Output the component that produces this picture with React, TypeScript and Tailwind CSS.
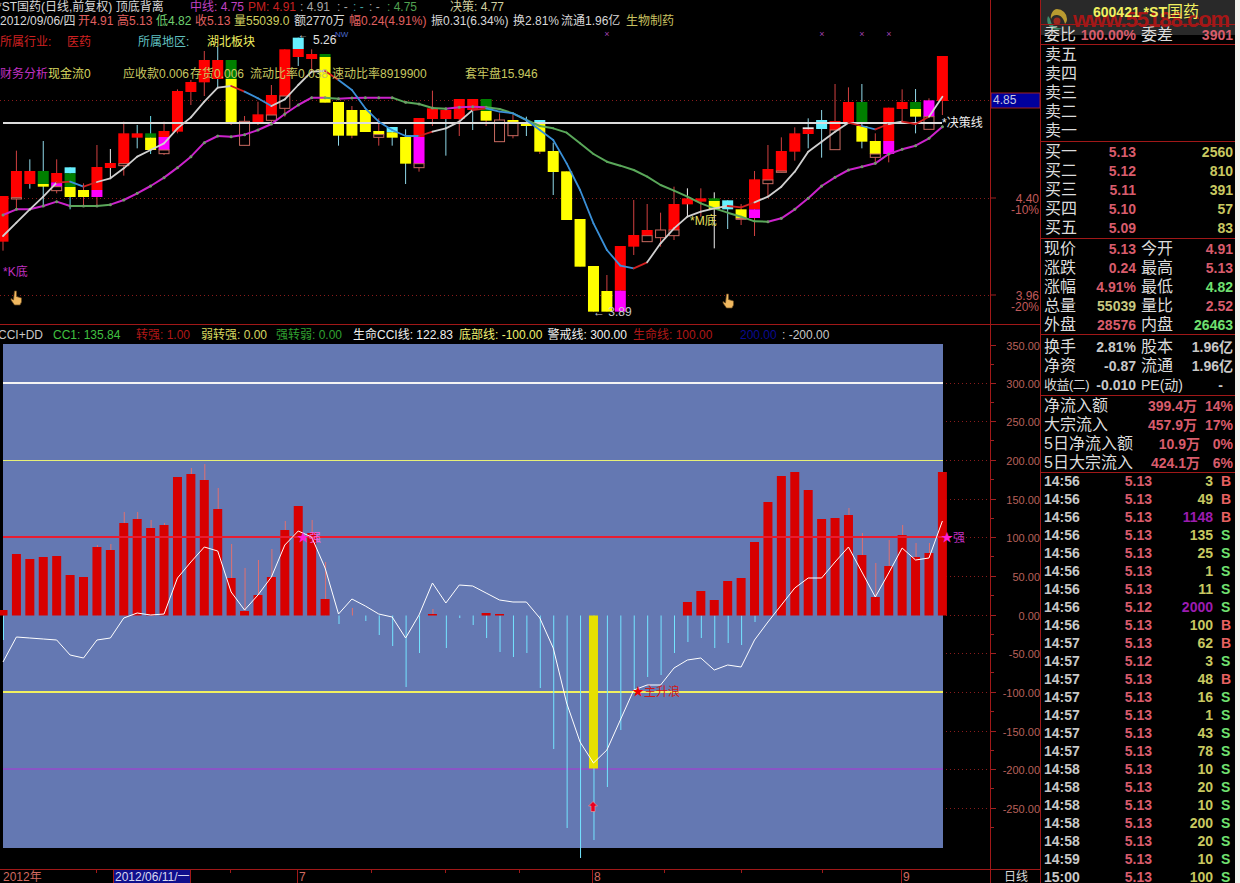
const FONT = "font-['Liberation_Sans','Noto_Sans_CJK_SC',sans-serif]";

const X = (i: number) => 3 + 13.42 * i;

const CLR: Record<string, string> = {
  r: "#ff0000",
  y: "#ffff00",
  g: "#007f00",
  c: "#66f0ff",
  m: "#ff00ff",
  w: "#e8e8e8",
};

// hi, lo, wick colour, then body pieces [top, bottom, colour] ("h" = hollow). y values are taken at 3x zoom
type Candle = [number, number, string, ...[number, number, string][]];
const CANDLES: Candle[] = [
  [588, 752, "#d04040", [588, 725, "r"]],
  [452, 625, "#d04040", [513, 593, "r"], [593, 597, "h"]],
  [478, 566, "#8fd8e8", [513, 552, "r"]],
  [423, 620, "#8fd8e8", [513, 552, "g"], [552, 560, "y"]],
  [478, 580, "#d04040", [519, 547, "r"], [547, 560, "m"], [560, 572, "h"]],
  [502, 628, "#66d8e8", [502, 520, "c"], [520, 561, "g"], [561, 591, "y"]],
  [550, 615, "#d04040", [570, 591, "y"]],
  [435, 615, "#d04040", [501, 570, "r"], [570, 591, "m"]],
  [447, 535, "#f0f0f0", [489, 504, "r"]],
  [365, 527, "#d04040", [400, 491, "r"], [491, 497, "h"]],
  [375, 445, "#8fd8e8", [400, 413, "r"]],
  [348, 462, "#66d8e8", [400, 413, "g"], [413, 450, "y"]],
  [365, 465, "#d04040", [393, 411, "r"], [411, 450, "m"], [450, 461, "h"]],
  [268, 400, "#d04040", [273, 395, "r"]],
  [240, 315, "#d04040", [246, 276, "r"]],
  [153, 288, "#d04040", [180, 247, "r"]],
  [140, 265, "#8fd8e8", [180, 237, "r"]],
  [180, 375, "#d04040", [180, 237, "g"], [237, 367, "y"]],
  [348, 436, "#d04040", [364, 436, "h"]],
  [305, 375, "#d04040", [343, 367, "r"]],
  [255, 375, "#d04040", [285, 345, "r"], [345, 361, "h"]],
  [148, 350, "#d04040", [148, 288, "r"], [288, 325, "h"]],
  [113, 198, "#8fd8e8", [113, 147, "c"], [147, 171, "r"]],
  [148, 215, "#d04040", [162, 177, "r"]],
  [162, 308, "#d04040", [162, 171, "g"], [171, 308, "y"]],
  [306, 437, "#8fd8e8", [306, 407, "y"]],
  [318, 415, "#d04040", [330, 407, "y"]],
  [330, 396, "#d04040", [330, 396, "y"]],
  [355, 437, "#d04040", [393, 404, "y"], [404, 412, "h"]],
  [381, 437, "#8fd8e8", [381, 397, "c"], [397, 413, "y"]],
  [388, 552, "#8fd8e8", [411, 491, "y"]],
  [354, 515, "#d04040", [354, 411, "r"], [411, 491, "m"], [491, 503, "h"]],
  [272, 378, "#d04040", [325, 357, "r"]],
  [330, 467, "#8fd8e8", [330, 357, "r"]],
  [297, 408, "#d04040", [297, 357, "r"]],
  [297, 390, "#8fd8e8", [297, 330, "r"]],
  [297, 378, "#d04040", [297, 333, "g"], [333, 362, "y"]],
  [340, 425, "#d04040", [360, 425, "h"]],
  [345, 415, "#d04040", [360, 367, "y"], [367, 407, "h"]],
  [350, 408, "#8fd8e8", [367, 378, "y"]],
  [360, 462, "#d04040", [360, 372, "c"], [372, 455, "y"]],
  [428, 585, "#8fd8e8", [453, 516, "y"]],
  [514, 660, "#d04040", [514, 660, "y"]],
  [657, 800, "#d04040", [657, 800, "y"]],
  [798, 935, "#d04040", [798, 935, "y"]],
  [825, 935, "#d04040", [873, 935, "y"]],
  [738, 935, "#d04040", [738, 872, "r"], [872, 935, "m"]],
  [600, 765, "#d04040", [705, 740, "r"]],
  [612, 725, "#d04040", [690, 707, "r"], [707, 725, "h"]],
  [638, 740, "#d04040", [690, 713, "h"]],
  [560, 720, "#d04040", [612, 690, "r"], [690, 707, "h"]],
  [565, 650, "#f0f0f0", [595, 613, "r"]],
  [565, 650, "#d04040", [595, 605, "r"]],
  [577, 745, "#f0f0f0", [595, 603, "g"], [603, 628, "y"]],
  [601, 687, "#8fd8e8", [601, 628, "c"]],
  [612, 675, "#d04040", [628, 655, "y"], [655, 658, "h"]],
  [513, 708, "#d04040", [538, 628, "r"], [628, 654, "m"]],
  [435, 590, "#d04040", [507, 540, "r"], [540, 551, "h"]],
  [412, 517, "#d04040", [453, 513, "r"], [513, 517, "h"]],
  [382, 482, "#d04040", [400, 455, "r"]],
  [355, 445, "#8fd8e8", [382, 388, "w"], [388, 402, "r"]],
  [330, 473, "#8fd8e8", [360, 387, "c"]],
  [252, 449, "#d04040", [363, 390, "r"], [390, 449, "h"]],
  [262, 372, "#d04040", [306, 368, "r"]],
  [252, 445, "#8fd8e8", [306, 367, "g"], [378, 425, "y"]],
  [400, 488, "#d04040", [423, 462, "y"], [462, 472, "h"]],
  [323, 487, "#d04040", [323, 423, "r"], [423, 462, "m"]],
  [268, 370, "#d04040", [306, 327, "r"]],
  [267, 400, "#8fd8e8", [306, 327, "g"], [327, 350, "y"]],
  [295, 388, "#d04040", [301, 350, "m"], [350, 388, "h"]],
  [168, 345, "#d04040", [168, 303, "r"]],
];

const FAST = [
  708, 668, 628, 590, 548, 545, 560, 546, 535, 505, 470, 450, 430, 385, 352, 305, 263, 258, 275, 295, 318, 298, 255, 215,
  213, 240, 270, 325, 365, 390, 408, 408, 395, 385, 365, 330, 325, 335, 340, 360, 390, 420, 490, 570, 670, 750, 797, 805,
  787, 730, 685, 650, 635, 625, 618, 622, 607, 590, 560, 515, 455, 425, 395, 368, 378, 388, 372, 365, 372, 350, 290,
];
const FAST_BLUE = [5, 18, 19, 25, 26, 27, 28, 29, 30, 36, 37, 38, 39, 40, 41, 42, 43, 44, 45, 46, 64];
const FAST_RED = [4, 6, 17, 24, 31, 35, 47, 54, 55, 63, 65, 67, 68];

const SLOW = [
  645, 628, 628, 618, 605, 618, 618, 618, 614, 600, 580, 558, 533, 503, 470, 428, 408, 410, 404, 390, 372, 342, 315, 293,
  293, 296, 294, 293, 293, 293, 307, 312, 324, 326, 322, 320, 322, 327, 340, 360, 378, 385, 398, 430, 462, 485, 497, 510,
  530, 555, 572, 590, 610, 625, 638, 650, 664, 665, 655, 628, 595, 558, 532, 510, 500, 490, 462, 448, 437, 415, 380,
];
const slowIsGreen = (i: number) => (i >= 5 && i < 8) || i === 24 || (i >= 29 && i < 33) || (i >= 36 && i < 57);

// lower pane, real page y
const ZERO = 615.5;
const BARS: Record<number, number> = {
  0: 610, 1: 554, 2: 559, 3: 557, 4: 556, 5: 575, 6: 577, 7: 547, 8: 550, 9: 523, 10: 519, 11: 528, 12: 525, 13: 477,
  14: 474, 15: 480, 16: 509, 17: 578, 18: 611, 19: 595, 20: 577, 21: 530, 22: 506, 23: 533, 24: 599, 32: 614, 36: 613,
  37: 614, 51: 602, 52: 591, 53: 600, 54: 581, 55: 578, 56: 542, 57: 502, 58: 476, 59: 472, 60: 490, 61: 519, 62: 518,
  63: 515, 64: 555, 65: 597, 66: 566, 67: 535, 68: 557, 69: 553, 70: 472,
};
const BAR_WICKS: Record<number, number> = {
  7: 545, 8: 544, 9: 512, 10: 512, 11: 520, 12: 523, 14: 468, 15: 464, 16: 488, 17: 544, 18: 568, 19: 560, 20: 549,
  21: 521, 23: 520, 24: 562, 26: 608, 32: 609, 63: 508, 64: 533, 65: 563, 66: 540, 67: 525, 68: 543, 69: 543,
};
const NEG: Record<number, number> = {
  0: 640, 25: 624, 27: 621, 28: 635, 29: 646, 30: 687, 31: 653, 33: 648, 34: 618, 35: 625, 36: 638, 37: 652, 38: 657,
  39: 653, 40: 688, 41: 749, 42: 828, 43: 858, 44: 840, 45: 787, 46: 730, 47: 690, 48: 677, 49: 675, 50: 653, 51: 642,
  52: 638, 53: 648, 54: 643, 55: 645, 56: 622,
};
const CCI = [
  662, 637, 638, 639, 640, 655, 658, 640, 638, 618, 613, 615, 614, 578, 562, 547, 551, 592, 610, 595, 577, 545, 531, 537,
  568, 614, 599, 606, 614, 617, 638, 615, 583, 603, 585, 586, 593, 600, 602, 602, 618, 648, 703, 742, 763, 750, 720, 690,
  685, 685, 668, 660, 658, 670, 665, 667, 640, 622, 605, 588, 578, 578, 562, 547, 572, 597, 573, 548, 560, 558, 521,
];

const CCI_LEVELS: [number, string][] = [
  [345, "350.00"],
  [383, "300.00"],
  [421, "250.00"],
  [460, "200.00"],
  [499, "150.00"],
  [537, "100.00"],
  [576, "50.00"],
  [615, "0.00"],
  [653, "-50.00"],
  [692, "-100.00"],
  [731, "-150.00"],
  [769, "-200.00"],
  [808, "-250.00"],
];

const TRADES: [string, string, string, string, boolean?][] = [
  ["14:56", "5.13", "3", "B"],
  ["14:56", "5.13", "49", "B"],
  ["14:56", "5.13", "1148", "B", true],
  ["14:56", "5.13", "135", "S"],
  ["14:56", "5.13", "25", "S"],
  ["14:56", "5.13", "1", "S"],
  ["14:56", "5.13", "11", "S"],
  ["14:56", "5.12", "2000", "S", true],
  ["14:56", "5.13", "100", "B"],
  ["14:57", "5.13", "62", "B"],
  ["14:57", "5.12", "3", "S"],
  ["14:57", "5.13", "48", "B"],
  ["14:57", "5.13", "16", "S"],
  ["14:57", "5.13", "1", "S"],
  ["14:57", "5.13", "43", "S"],
  ["14:57", "5.13", "78", "S"],
  ["14:58", "5.13", "10", "S"],
  ["14:58", "5.13", "20", "S"],
  ["14:58", "5.13", "10", "S"],
  ["14:58", "5.13", "200", "S"],
  ["14:58", "5.13", "20", "S"],
  ["14:59", "5.13", "10", "S"],
  ["15:00", "5.13", "100", "S"],
];

function Hand({ x, y }: { x: number; y: number }) {
  return (
    <g transform={`translate(${x} ${y})`}>
      <path
        d="M3.500 0h2v5.500l5 1.500v4l-1.500 3h-5.500l-3.500-5v-1.500l2.500 1.500z"
        fill="#f0b860"
        stroke="#6a4a20"
        strokeWidth={0.7}
      />
    </g>
  );
}

function MainChart() {
  return (
    <svg width={990} height={296} viewBox="0 28 990 296" className="block">
      {[100, 198, 295].map((y) => (
        <line key={y} x1={0} x2={990} y1={y + 0.5} y2={y + 0.5} stroke="#8a1c1c" strokeDasharray="1 3" />
      ))}
      {CANDLES.map((c, i) => {
        const [hi, lo, wick, ...parts] = c;
        return (
          <g key={i}>
            <line x1={X(i)} x2={X(i)} y1={hi / 3} y2={lo / 3} stroke={wick} />
            {parts.map(([t, b, k], n) =>
              k === "h" ? (
                <rect key={n} x={X(i) - 5} y={t / 3} width={10} height={(b - t) / 3} fill="#000" stroke="#c86a60" />
              ) : (
                <rect key={n} x={X(i) - 5.5} y={t / 3} width={11} height={(b - t) / 3} fill={CLR[k]} />
              ),
            )}
          </g>
        );
      })}
      <line x1={3} x2={942} y1={123} y2={123} stroke="#dcdcdc" strokeWidth={2} />
      {SLOW.slice(0, -1).map((v, i) => (
        <line
          key={i}
          x1={X(i)}
          y1={v / 3}
          x2={X(i + 1)}
          y2={SLOW[i + 1] / 3}
          stroke={slowIsGreen(i) ? "#5aa85a" : "#cc22cc"}
          strokeWidth={2}
          strokeLinecap="round"
        />
      ))}
      {SLOW.map((v, i) =>
        i >= 37 && i < 57 ? null : <circle key={i} cx={X(i)} cy={v / 3} r={1.5} fill="#6f9a68" />,
      )}
      {FAST.slice(0, -1).map((v, i) => (
        <line
          key={i}
          x1={X(i)}
          y1={v / 3}
          x2={X(i + 1)}
          y2={FAST[i + 1] / 3}
          stroke={FAST_BLUE.includes(i) ? "#3a90d8" : FAST_RED.includes(i) ? "#d02020" : "#d0d0d0"}
          strokeWidth={1.8}
          strokeLinecap="round"
        />
      ))}
      {[607, 822, 862, 889].map((x) => (
        <text key={x} x={x} y={37} fontSize={9} fill="#a040b0" textAnchor="middle">
          ×
        </text>
      ))}
      <text x={335} y={37} fontSize={8} fill="#4a6ad0">
        NW
      </text>
      <g fontSize={12} className={FONT}>
        <text x={0} y={46} fontSize={12} fill="#d02020">所属行业:</text>
        <text x={67} y={46} fill="#d02020">医药</text>
        <text x={138} y={46} fill="#60c0c0">所属地区:</text>
        <text x={207} y={46} fill="#f0f060">湖北板块</text>
        <text x={0} y={78} fill="#c030c0">财务分析</text>
        <text x={48} y={78} fill="#d8d860">现金流0</text>
        <text x={123} y={78} fill="#c8c860">应收款0.006</text>
        <text x={190} y={78} fill="#c8c860">存货0.006</text>
        <text x={250} y={78} fill="#c8c860">流动比率0.038</text>
        <text x={332} y={78} fill="#c8c860">速动比率8919900</text>
        <text x={465} y={78} fill="#c8c860">套牢盘15.946</text>
        <text x={298} y={38} fontSize={10} fill="#e0e0e0">←</text>
        <text x={313} y={44} fill="#e0e0e0">5.26</text>
        <text x={3} y={276} fill="#c030c0">*K底</text>
        <text x={690} y={225} fill="#e8e060">*M底</text>
        <text x={942} y={127} fill="#f0f0f0">*决策线</text>
        <text x={593} y={316} fill="#c8c8c8">← 3.89</text>
      </g>
      <Hand x={11} y={291} />
      <Hand x={723} y={294} />
      <path d="M969 0l5 5-5 5-5-5z" fill="none" stroke="#a02020" />
      <path d="M978.500 1h9v9h-9zM983 1v9" fill="none" stroke="#a02020" />
    </svg>
  );
}

function MainAxis() {
  return (
    <svg width={49} height={324} className={`block ${FONT}`}>
      {[
        [198, "4.40"],
        [295, "3.96"],
      ].map(([y, t]) => (
        <g key={t as string}>
          <line x1={0} x2={5} y1={y as number} y2={y as number} stroke="#a02020" />
          <text x={48} y={(y as number) + 5} fontSize={12} fill="#c05a5a" textAnchor="end">
            {t}
          </text>
        </g>
      ))}
      <text x={48} y={214} fontSize={12} fill="#c05a5a" textAnchor="end">-10%</text>
      <text x={48} y={311} fontSize={12} fill="#c05a5a" textAnchor="end">-20%</text>
      <rect x={0} y={93} width={49} height={15} fill="#00009c" stroke="#a02020" />
      <text x={2} y={104} fontSize={12} fill="#c8c8e0">4.85</text>
    </svg>
  );
}

function CciChart() {
  return (
    <svg width={990} height={526} viewBox="0 344 990 526" className="absolute inset-0">
      <line x1={3} x2={943} y1={383} y2={383} stroke="#f4f4f4" strokeWidth={2} />
      <line x1={3} x2={943} y1={460.500} y2={460.500} stroke="#e8f078" />
      <line x1={3} x2={943} y1={692} y2={692} stroke="#f0f060" strokeWidth={2} />
      <line x1={3} x2={943} y1={769} y2={769} stroke="#b030d8" />
      {CCI_LEVELS.filter(([y]) => y !== 345).map(([y]) => (
        <line key={y} x1={946} x2={990} y1={y + 0.5} y2={y + 0.5} stroke="#8a1c1c" strokeDasharray="1 3" />
      ))}
      {Object.entries(NEG).map(([i, y]) => (
        <line key={i} x1={X(+i) + 0.5} x2={X(+i) + 0.5} y1={ZERO} y2={y} stroke="#74e4ff" />
      ))}
      <rect x={X(44) - 4.500} y={ZERO} width={9} height={153} fill="#e6e000" />
      {Object.entries(BAR_WICKS).map(([i, y]) => (
        <line key={i} x1={X(+i) + 0.5} x2={X(+i) + 0.5} y1={y} y2={ZERO} stroke="#e07070" />
      ))}
      {Object.entries(BARS).map(([i, y]) => (
        <rect key={i} x={X(+i) - 4.500} y={y} width={9} height={ZERO - y} fill="#d80000" />
      ))}
      <line x1={3} x2={943} y1={537} y2={537} stroke="#e81c30" strokeWidth={2} />
      <polyline points={CCI.map((v, i) => `${X(i)},${v}`).join(" ")} fill="none" stroke="#ffffff" strokeWidth={1} />
      <g fontSize={12} className={FONT}>
        <text x={297} y={542} fill="#ff20d8">★</text>
        <text x={309} y={542} fill="#f060e0">强</text>
        <text x={941} y={542} fill="#ff20d8">★</text>
        <text x={953} y={542} fill="#c030c0">强</text>
        <text x={632} y={696} fill="#f00000">★</text>
        <text x={644} y={696} fill="#d01818">主升浪</text>
      </g>
      <path d="M593 801.500l4.500 4.500h-2.500v5.500h-4v-5.500h-2.500z" fill="#e80020" stroke="#f0a0a0" strokeWidth={0.6} />
    </svg>
  );
}

function CciAxis() {
  return (
    <svg width={49} height={545} viewBox="0 325 49 545" className={`block ${FONT}`}>
      {CCI_LEVELS.map(([y, t]) => (
        <g key={y}>
          <line x1={0} x2={5} y1={y + 0.5} y2={y + 0.5} stroke="#a02020" />
          <line x1={0} x2={3} y1={y + 19.5} y2={y + 19.5} stroke="#a02020" />
          <text x={49} y={y + 4.5} fontSize={11} fill="#b8605a" textAnchor="end">
            {t}
          </text>
        </g>
      ))}
    </svg>
  );
}

function Legend({ className, children }: { className: string; children: React.ReactNode }) {
  return <span className={`shrink-0 whitespace-nowrap ${className}`}>{children}</span>;
}

function Cell({ label, value, color }: { label: string; value: string; color: string }) {
  return (
    <div className="flex w-[92px] items-center justify-between">
      <span className="text-[16px] text-[#dcdcdc]">{label}</span>
      <span className={`text-[14px] font-bold whitespace-nowrap ${color}`}>{value}</span>
    </div>
  );
}

function QuadRow({ a, b, ca, cb, va, vb }: { a: string; b: string; ca: string; cb: string; va: string; vb: string }) {
  return (
    <div className="flex h-[19px] gap-[5px] pl-[3px]">
      <Cell label={a} value={va} color={ca} />
      <Cell label={b} value={vb} color={cb} />
    </div>
  );
}

function BookRow({ label, price, qty }: { label: string; price?: string; qty?: string }) {
  return (
    <div className="flex h-[19px] items-center pl-[4px]">
      <span className="w-[33px] text-[16px] text-[#dcdcdc]">{label}</span>
      <span className="w-[58px] text-right text-[14px] font-bold text-[#d85c6c]">{price}</span>
      <span className="w-[97px] text-right text-[14px] font-bold text-[#c8c860]">{qty}</span>
    </div>
  );
}

function FlowRow({ label, value, pct, wide }: { label: string; value: string; pct: string; wide?: boolean }) {
  return (
    <div className="flex h-[19px] items-center pl-[3px]">
      <span className={`${wide ? "w-[105px]" : "w-[90px]"} shrink-0 text-[16px] whitespace-nowrap text-[#dcdcdc]`}>{label}</span>
      <span className={`${wide ? "w-[51px]" : "w-[63px]"} shrink-0 text-right text-[14px] font-bold whitespace-nowrap text-[#d85c6c]`}>{value}</span>
      <span className="flex-1 pr-[2px] text-right text-[14px] font-bold text-[#d85c6c]">{pct}</span>
    </div>
  );
}

function SidePanel() {
  return (
    <div className={`relative h-[883px] w-[195px] overflow-hidden border-l border-[#a01818] bg-black ${FONT}`}>
      <div className="absolute left-0 top-0 h-[35px] w-full bg-[#333333]/80" />
      <div className="absolute left-[32px] top-[6px] text-[22px] font-bold leading-[28px] tracking-[-1px] whitespace-nowrap text-[#b81414]/90">
        www.55188.com
      </div>
      <svg width={26} height={26} viewBox="0 0 26 26" className="absolute left-[3px] top-[7px]">
        <path d="M13 2a10 10 0 0 1 10 10c0 2-1 4-2 5-1-5-4-9-8-9a6 6 0 0 0-6 4C6 8 9 2 13 2z" fill="#b89a30" />
        <path d="M4 9c-2 5 0 11 5 13 3 1 7 1 9-1-5 1-10-2-11-6-.5-2-1-4-3-6z" fill="#3c8a6a" />
        <circle cx={13} cy={14} r={3.500} fill="#9a2a20" />
      </svg>
      <div className="relative flex h-[25px] items-center border-b border-[#a01818] pl-[52px] text-[14px] font-bold text-[#f0f060]">
        600421 *ST<span className="text-[16px] font-normal">国药</span>
      </div>
      <div className="relative flex h-[20px] items-center gap-[5px] border-b border-[#a01818] pl-[3px]">
        <Cell label="委比" value="100.00%" color="text-[#d85c6c]" />
        <Cell label="委差" value="3901" color="text-[#d85c6c]" />
      </div>
      <div className="h-[97px] border-b border-[#a01818]">
        {["卖五", "卖四", "卖三", "卖二", "卖一"].map((t) => (
          <BookRow key={t} label={t} />
        ))}
      </div>
      <div className="h-[97px] border-b border-[#a01818]">
        <BookRow label="买一" price="5.13" qty="2560" />
        <BookRow label="买二" price="5.12" qty="810" />
        <BookRow label="买三" price="5.11" qty="391" />
        <BookRow label="买四" price="5.10" qty="57" />
        <BookRow label="买五" price="5.09" qty="83" />
      </div>
      <div className="h-[96px] border-b border-[#a01818]">
        <QuadRow a="现价" va="5.13" ca="text-[#d85c6c]" b="今开" vb="4.91" cb="text-[#d85c6c]" />
        <QuadRow a="涨跌" va="0.24" ca="text-[#d85c6c]" b="最高" vb="5.13" cb="text-[#d85c6c]" />
        <QuadRow a="涨幅" va="4.91%" ca="text-[#d85c6c]" b="最低" vb="4.82" cb="text-[#70e070]" />
        <QuadRow a="总量" va="55039" ca="text-[#c8c880]" b="量比" vb="2.52" cb="text-[#d85c6c]" />
        <QuadRow a="外盘" va="28576" ca="text-[#d85c6c]" b="内盘" vb="26463" cb="text-[#70e070]" />
      </div>
      <div className="h-[61px] border-b border-[#a01818] pt-[2px]">
        <QuadRow a="换手" va="2.81%" ca="text-[#c8c8c8]" b="股本" vb="1.96亿" cb="text-[#c8c8c8]" />
        <QuadRow a="净资" va="-0.87" ca="text-[#c8c8c8]" b="流通" vb="1.96亿" cb="text-[#c8c8c8]" />
        <div className="flex h-[19px] gap-[5px] pl-[3px]">
          <div className="flex w-[92px] items-center justify-between">
            <span className="text-[13px] tracking-[-0.5px] whitespace-nowrap text-[#dcdcdc]">收益(二)</span>
            <span className="text-[14px] font-bold text-[#c8c8c8]">-0.010</span>
          </div>
          <div className="flex w-[92px] items-center justify-between">
            <span className="text-[14px] text-[#dcdcdc]">PE(动)</span>
            <span className="pr-[10px] text-[14px] font-bold text-[#c8c8c8]">-</span>
          </div>
        </div>
      </div>
      <div className="h-[77px] border-b border-[#a01818]">
        <FlowRow label="净流入额" value="399.4万" pct="14%" />
        <FlowRow label="大宗流入" value="457.9万" pct="17%" />
        <FlowRow label="5日净流入额" value="10.9万" pct="0%" wide />
        <FlowRow label="5日大宗流入" value="424.1万" pct="6%" wide />
      </div>
      <div className="-mt-[1px]">
        {TRADES.map(([t, p, q, s, big], n) => (
          <div key={n} className="flex h-[18px] items-center pl-[3px] text-[14px] font-bold">
            <span className="w-[40px] text-[#c8c8c8]">{t}</span>
            <span className="w-[68px] text-right text-[#d85c6c]">{p}</span>
            <span className={`w-[61px] text-right ${big ? "text-[#9c1cb0]" : "text-[#c8c860]"}`}>{q}</span>
            <span className={`ml-[8px] ${s === "B" ? "text-[#e86060]" : "text-[#70e070]"}`}>{s}</span>
          </div>
        ))}
      </div>
    </div>
  );
}

export default function App() {
  return (
    <div className={`flex h-[883px] w-[1240px] overflow-hidden bg-black text-[12px] leading-[14px] ${FONT}`}>
      <div className="flex h-full w-[1040px] flex-col">
        {/* price pane */}
        <div className="flex h-[325px] border-b border-[#a01818]">
          <div className="w-[990px]">
            <div className="flex h-[14px] items-center overflow-hidden text-[#d8d8d8]">
              <Legend className="w-[190px] -indent-[3px]">*ST国药(日线,前复权) 顶底背离</Legend>
              <Legend className="w-[58px] text-[#c040c0]">中线: 4.75</Legend>
              <Legend className="w-[52px] text-[#c82020]">PM: 4.91</Legend>
              <Legend className="w-[37px] text-[#a8a8a8]">: 4.91</Legend>
              <Legend className="w-[16px] text-[#a8a8a8]">: -</Legend>
              <Legend className="w-[16px] text-[#40a0a0]">: -</Legend>
              <Legend className="w-[18px] text-[#a8a8a8]">: -</Legend>
              <Legend className="w-[63px] text-[#50a050]">: 4.75</Legend>
              <Legend className="text-[#d0d0a0]">决策: 4.77</Legend>
            </div>
            <div className="flex h-[14px] items-center overflow-hidden text-[#d8d8d8]">
              <Legend className="w-[78px]">2012/09/06/四</Legend>
              <Legend className="w-[39px] text-[#e06060]">开4.91</Legend>
              <Legend className="w-[39px] text-[#e06060]">高5.13</Legend>
              <Legend className="w-[39px] text-[#70d070]">低4.82</Legend>
              <Legend className="w-[39px] text-[#e06060]">收5.13</Legend>
              <Legend className="w-[60px] text-[#d0d060]">量55039.0</Legend>
              <Legend className="w-[55px]">额2770万</Legend>
              <Legend className="w-[82px] text-[#e06060]">幅0.24(4.91%)</Legend>
              <Legend className="w-[82px]">振0.31(6.34%)</Legend>
              <Legend className="w-[48px]">换2.81%</Legend>
              <Legend className="w-[65px]">流通1.96亿</Legend>
              <Legend className="text-[#c8c060]">生物制药</Legend>
            </div>
            <MainChart />
          </div>
          <div className="border-l border-[#a01818]">
            <MainAxis />
          </div>
        </div>
        {/* cci pane */}
        <div className="flex h-[545px] border-b border-[#a01818]">
          <div className="w-[990px]">
            <div className="flex h-[19px] items-center overflow-hidden">
              <Legend className="w-[53px] -indent-[2px] text-[#c8c8c8]">CCI+DD</Legend>
              <Legend className="w-[83px] text-[#40c040]">CC1: 135.84</Legend>
              <Legend className="w-[65px] text-[#b01818]">转强: 1.00</Legend>
              <Legend className="w-[75px] text-[#d8d860]">弱转强: 0.00</Legend>
              <Legend className="w-[77px] text-[#30a030]">强转弱: 0.00</Legend>
              <Legend className="w-[106px] text-[#f0f0f0]">生命CCI线: 122.83</Legend>
              <Legend className="w-[88.500px] text-[#f0f070]">底部线: -100.00</Legend>
              <Legend className="w-[85.500px] text-[#f0f0f0]">警戒线: 300.00</Legend>
              <Legend className="w-[107px] text-[#b01818]">生命线: 100.00</Legend>
              <Legend className="w-[42px] text-[#0a0a90]">200.00</Legend>
              <Legend className="text-[#c8c8c8]">: -200.00</Legend>
            </div>
            <div className="relative h-[526px] w-[990px]">
              <div className="ml-[3px] h-[504px] w-[940px] bg-[#6478b2]" />
              <CciChart />
            </div>
          </div>
          <div className="border-l border-[#a01818]">
            <CciAxis />
          </div>
        </div>
        {/* time axis */}
        <div className="flex h-[13px] items-center text-[12px] text-[#d06a60]">
          <div className="relative flex w-[990px] items-center">
            <span className="ml-[3px] w-[110px]">2012年</span>
            <span className="h-[13px] w-[78px] border-x border-[#a01818] bg-[#10108c] pl-[1px] text-[#d8d8f0]">2012/06/11/一</span>
            <span className="ml-[106px] h-[13px] w-[295px] border-l border-[#a01818] pl-[1px]">7</span>
            <span className="h-[13px] w-[309px] border-l border-[#a01818] pl-[1px]">8</span>
            <span className="h-[13px] border-l border-[#a01818] pl-[1px]">9</span>
            <svg width={990} height={3} className="absolute left-0 top-0">
              {[96, 230, 371, 445, 519, 664, 741, 822].map((x) => (
                <line key={x} x1={x + 0.5} x2={x + 0.5} y1={0} y2={3} stroke="#a01818" />
              ))}
            </svg>
          </div>
          <div className="h-[13px] flex-1 border-l border-[#a01818] pl-[13px] text-[#d8d8d8]">日线</div>
        </div>
      </div>
      <SidePanel />
      <div className="h-full w-[5px] bg-[#f2f2ee]" />
    </div>
  );
}
